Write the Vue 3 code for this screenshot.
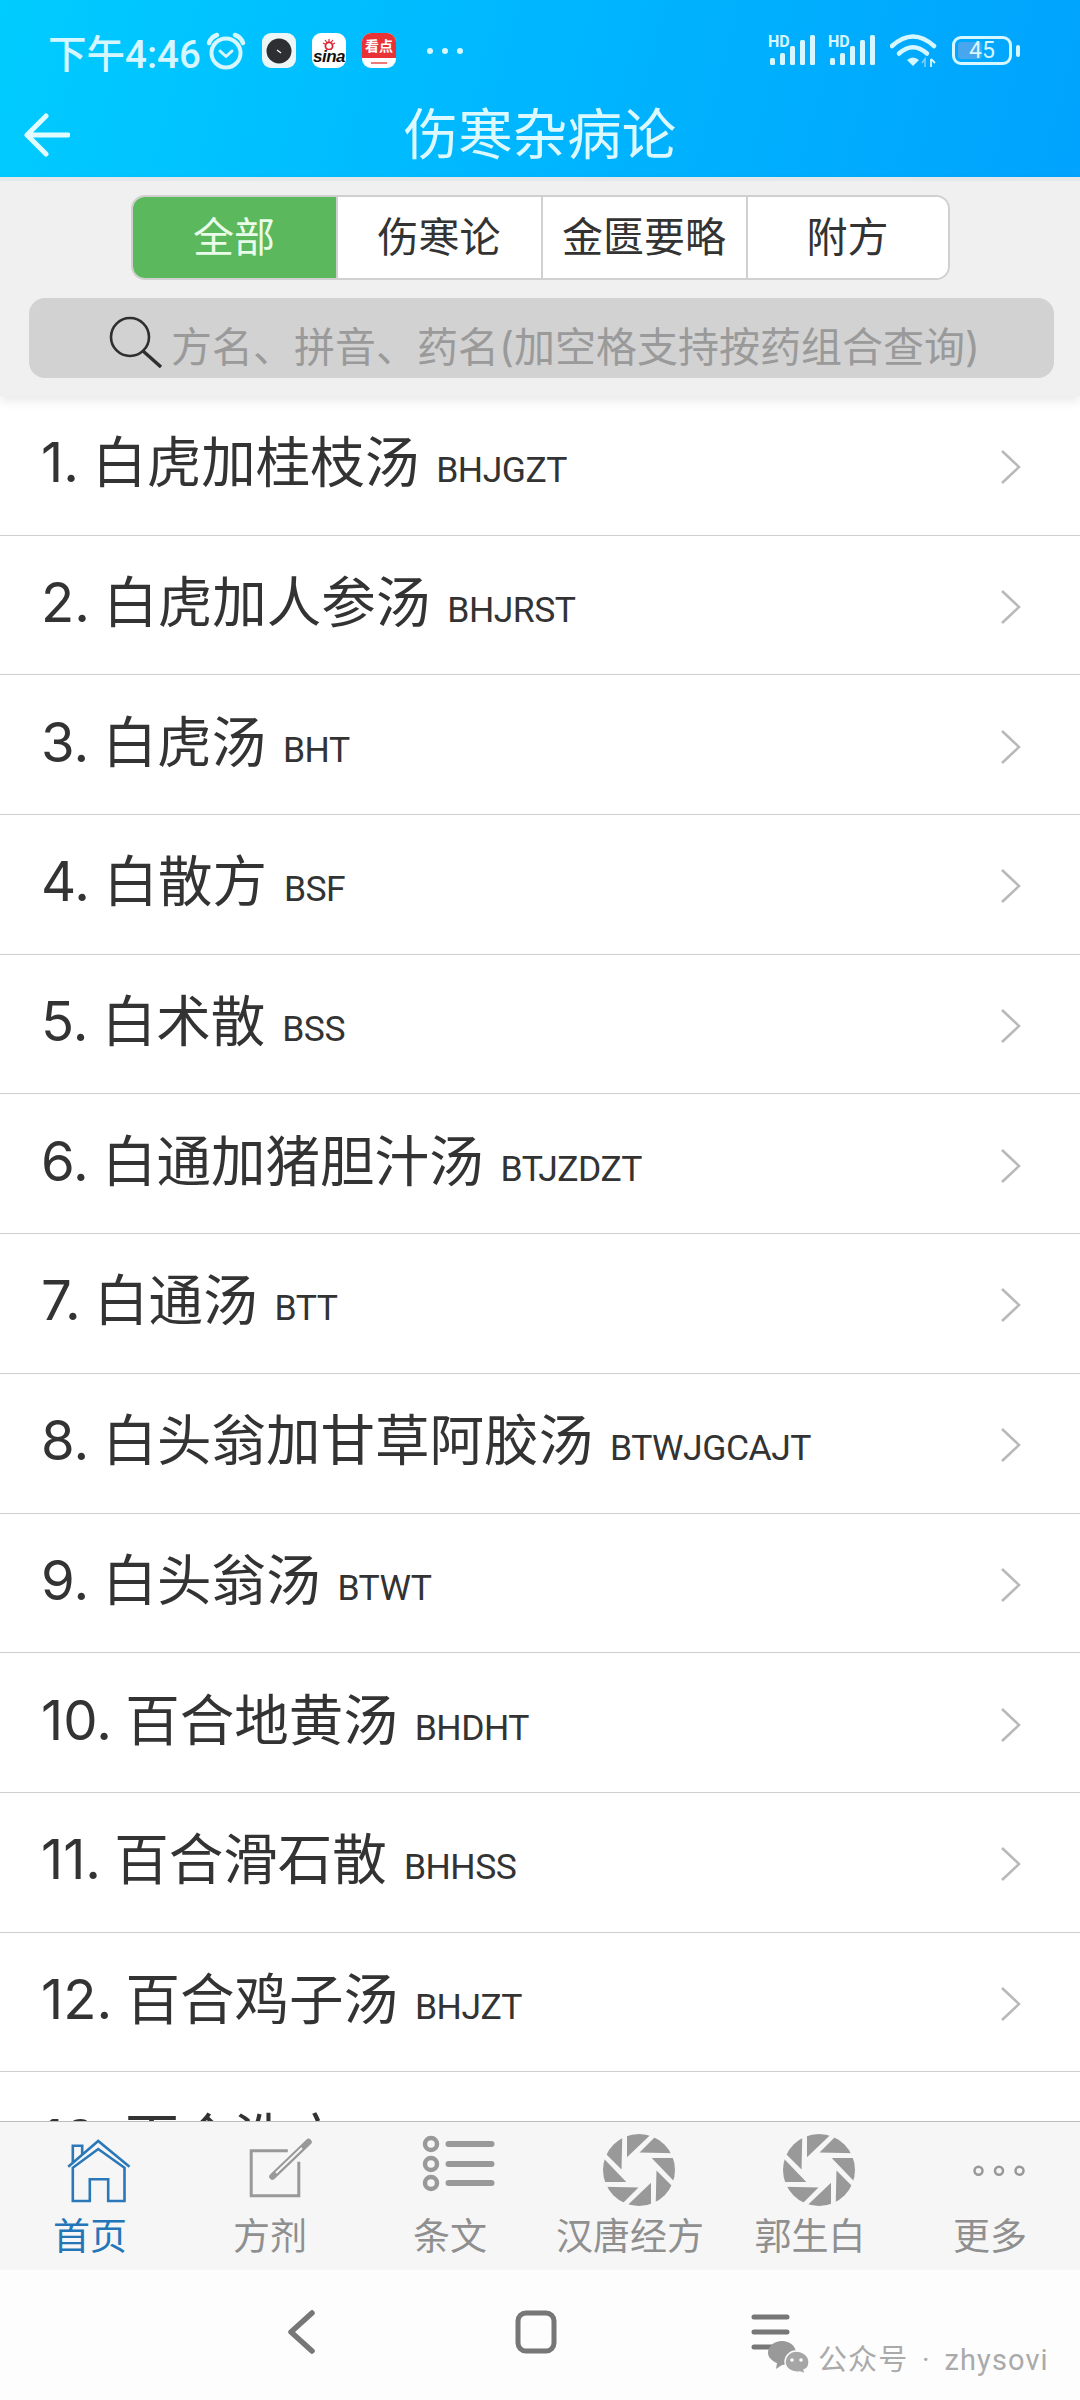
<script setup>
const rows = [
  ['白虎加桂枝汤', 'BHJGZT'],
  ['白虎加人参汤', 'BHJRST'],
  ['白虎汤', 'BHT'],
  ['白散方', 'BSF'],
  ['白术散', 'BSS'],
  ['白通加猪胆汁汤', 'BTJZDZT'],
  ['白通汤', 'BTT'],
  ['白头翁加甘草阿胶汤', 'BTWJGCAJT'],
  ['白头翁汤', 'BTWT'],
  ['百合地黄汤', 'BHDHT'],
  ['百合滑石散', 'BHHSS'],
  ['百合鸡子汤', 'BHJZT'],
  ['百合洗方', 'BHXF'],
]
const segments = ['全部', '伤寒论', '金匮要略', '附方']
const tabs = [
  { label: '首页', icon: 'home', active: true },
  { label: '方剂', icon: 'edit' },
  { label: '条文', icon: 'list' },
  { label: '汉唐经方', icon: 'aperture' },
  { label: '郭生白', icon: 'aperture' },
  { label: '更多', icon: 'more' },
]
const blades = [0, 45, 90, 135, 180, 225, 270, 315]
const signalBars = [
  { x: 2, y: 23, h: 7 },
  { x: 12, y: 18, h: 12 },
  { x: 22, y: 11, h: 19 },
  { x: 32, y: 5, h: 25 },
  { x: 42, y: 0, h: 30 },
]
</script>

<template>
  <div class="screen">
    <header class="appbar">
      <div class="status">
        <span class="time">下午4:46</span>
        <svg class="alarm" width="40" height="38" viewBox="0 0 40 38" fill="none" stroke="#d6f7ff">
          <circle cx="20" cy="21" r="14.5" stroke-width="4" />
          <path d="M3 11 Q5 5 11 3 M37 11 Q35 5 29 3" stroke-width="4.5" stroke-linecap="round" />
          <path d="M14 19 L20 24.5 L26 19" stroke-width="3" stroke-linecap="round" stroke-linejoin="round" />
        </svg>
        <span class="app app-clock">
          <svg width="26" height="26" viewBox="0 0 26 26">
            <circle cx="13" cy="13" r="12.5" fill="#2e2f33" />
            <path d="M11 12 L15 15" stroke="#fff" stroke-width="1.2" />
          </svg>
        </span>
        <span class="app app-sina">
          <svg width="16" height="11" viewBox="0 0 16 11" fill="none" stroke="#d9232e">
            <circle cx="8" cy="7" r="3.6" stroke-width="1.8" />
            <path d="M2 4 L4 5 M4 1 L6 3.5 M8 0 V3 M12 1 L10 3.5 M14 4 L12 5" stroke-width="1.2" />
          </svg>
          <span class="sina-text">sina</span>
        </span>
        <span class="app app-kd">
          <span class="kd-top">看点</span>
          <span class="kd-bottom"><i></i></span>
        </span>
        <span class="status-dots"><i></i><i></i><i></i></span>

        <span class="status-right">
          <svg v-for="n in 2" :key="n" class="signal" width="50" height="32" viewBox="0 0 50 32">
            <text x="0" y="12" class="hd">HD</text>
            <rect v-for="b in signalBars" :key="b.x" :x="b.x" :y="b.y" width="5" :height="b.h" rx="1.5" fill="#d6f7ff" />
          </svg>
          <svg class="wifi" width="47" height="34" viewBox="0 0 47 34" fill="none" stroke="#d6f7ff">
            <path d="M2 12 Q23 -7 44 12" stroke-width="4.5" stroke-linecap="round" />
            <path d="M9 19.5 Q23 7 37 19.5" stroke-width="4.5" stroke-linecap="round" />
            <path d="M17 26 L23 32 L29 26 Q23 21 17 26 Z" fill="#d6f7ff" stroke="none" />
            <path d="M35 33 V25 L32 29" stroke="#7fcdf3" stroke-width="1.6" />
            <path d="M41 25 V33 M41 25 L45 29" stroke-width="1.8" />
          </svg>
          <span class="battery">
            <span class="battery-box">
              <span class="battery-fill"></span>
              <span class="battery-num">45</span>
            </span>
            <span class="battery-nub"></span>
          </span>
        </span>
      </div>

      <div class="toolbar">
        <svg class="back" width="46" height="44" viewBox="0 0 46 44" fill="none" stroke="#e2fbff" stroke-width="5" stroke-linecap="round" stroke-linejoin="round">
          <path d="M22 3 L3 22 L22 41 M3 22 H44" />
        </svg>
        <h1 class="title">伤寒杂病论</h1>
      </div>
    </header>

    <section class="filter">
      <div class="segmented">
        <button v-for="(s, i) in segments" :key="s" class="seg" :class="{ 'seg-on': i === 0 }">{{ s }}</button>
      </div>
      <div class="search">
        <svg class="lens" width="54" height="52" viewBox="0 0 54 52" fill="none" stroke="#2f2f2f" stroke-width="2.6">
          <circle cx="21" cy="21" r="19" />
          <path d="M34 35 L52 51" stroke-width="3.4" />
        </svg>
        <span class="placeholder">方名、拼音、药名(加空格支持按药组合查询)</span>
      </div>
    </section>

    <main class="list">
      <div v-for="(r, i) in rows" :key="r[1]" class="row">
        <span class="row-name">{{ i + 1 }}. {{ r[0] }}</span>
        <span class="row-code">{{ r[1] }}</span>
        <svg class="chev" width="22" height="36" viewBox="0 0 22 36" fill="none" stroke="#b9b9b9" stroke-width="2.6">
          <path d="M2 2 L19 18 L2 34" />
        </svg>
      </div>
    </main>

    <nav class="tabbar">
      <div v-for="t in tabs" :key="t.label" class="tab" :class="{ 'tab-on': t.active }">
        <svg class="tab-icon" width="90" height="80" viewBox="0 0 90 80" fill="none">
          <g v-if="t.icon === 'home'" stroke="#2a78b8" stroke-width="2.6">
            <path d="M14.2 37.7 L44.2 12 L75.5 37.7" />
            <path d="M18.8 38.7 L44.2 20 L70.5 38.7" />
            <path d="M18.8 38 V72 H35.8 V50.3 H54.2 V72 H70.5 V38" />
            <path d="M18.8 33 V16.7 H28.2 V25.6" />
          </g>
          <g v-else-if="t.icon === 'edit'">
            <path d="M53.8 21.7 H17.2 V66.7 H64.8 V32.7" stroke="#999" stroke-width="3" />
            <path d="M38.5 47.5 L74.5 13" stroke="#999" stroke-width="6.5" stroke-linecap="round" />
            <path d="M42 44 L68 19" stroke="#f6f6f6" stroke-width="2" />
          </g>
          <g v-else-if="t.icon === 'list'">
            <circle cx="17" cy="15" r="6" stroke="#999" stroke-width="4.5" />
            <circle cx="17" cy="35" r="6" stroke="#999" stroke-width="4.5" />
            <circle cx="17" cy="54" r="6" stroke="#999" stroke-width="4.5" />
            <path d="M34.5 15 H77.5 M34.5 35 H77.5 M34.5 54 H77.5" stroke="#999" stroke-width="6" stroke-linecap="round" />
          </g>
          <g v-else-if="t.icon === 'aperture'">
            <clipPath id="aperture-clip"><circle cx="45" cy="41" r="36" /></clipPath>
            <g clip-path="url(#aperture-clip)">
              <polygon
                v-for="a in blades"
                :key="a"
                points="33,28.3 33,1 61,1.5"
                fill="#999"
                :transform="`rotate(${a} 45 41)`"
              />
            </g>
          </g>
          <g v-else stroke="#999" stroke-width="2.5">
            <circle cx="24.5" cy="41.7" r="4" />
            <circle cx="45" cy="41.7" r="4" />
            <circle cx="65.5" cy="41.7" r="4" />
          </g>
        </svg>
        <span class="tab-label">{{ t.label }}</span>
      </div>
    </nav>

    <footer class="sysnav">
      <span class="sys-slot">
        <svg width="28" height="44" viewBox="0 0 28 44" fill="none" stroke="#777" stroke-width="5.5" stroke-linecap="round" stroke-linejoin="round">
          <path d="M25 3 L4 22 L25 41" />
        </svg>
      </span>
      <span class="sys-slot">
        <svg width="42" height="44" viewBox="0 0 42 44" fill="none" stroke="#777" stroke-width="5">
          <rect x="3" y="3" width="36" height="38" rx="8" />
        </svg>
      </span>
      <span class="sys-slot">
        <svg width="40" height="40" viewBox="0 0 40 40" fill="none" stroke="#777" stroke-width="5" stroke-linecap="round">
          <path d="M3 5 H36 M3 20 H36 M3 35 H36" />
        </svg>
      </span>
      <div class="watermark">
        <svg width="42" height="34" viewBox="0 0 42 34">
          <path d="M14 1 C22 1 28 6 28 13 C28 20 22 25 14 25 L8 29 L9 23 C4 21 0 17 0 13 C0 6 6 1 14 1 Z" fill="#999" />
          <path d="M28 11 C35 11 41 16 41 22 C41 26 39 29 36 30 L37 34 L32 32 C25 33 17 29 17 22 C17 16 22 11 28 11 Z" fill="#a6a6a6" stroke="#fdfdfd" stroke-width="1.4" />
          <circle cx="24" cy="20" r="1.8" fill="#fdfdfd" />
          <circle cx="33" cy="20" r="1.8" fill="#fdfdfd" />
        </svg>
        <span class="wm-text">公众号 · zhysovi</span>
      </div>
    </footer>
  </div>
</template>

<style scoped>
.screen {
  position: relative;
  width: 1080px;
  height: 2400px;
  overflow: hidden;
  display: flex;
  flex-direction: column;
  background: #fff;
  font-family: "Inter", "Noto Sans CJK SC", sans-serif;
  color: #333;
}

/* header */
.appbar {
  flex: none;
  height: 177px;
  background: linear-gradient(105deg, #00ccff 0%, #00baff 40%, #00a3fd 100%);
  color: #d6f7ff;
}
.status {
  height: 86px;
  padding: 15px 0 0 48px;
  box-sizing: border-box;
  display: flex;
  align-items: center;
}
.time {
  font-family: "Roboto", "Noto Sans CJK SC", sans-serif;
  font-size: 38.5px;
  font-weight: 500;
  white-space: nowrap;
  width: 158px;
}
.alarm {
  margin-right: 16px;
}
.app {
  flex: none;
  width: 34px;
  height: 35px;
  border-radius: 9px;
  margin-right: 16px;
  overflow: hidden;
  display: flex;
  flex-direction: column;
  align-items: center;
  justify-content: center;
  background: #fff;
}
.app-clock { background: #edf6f6; }
.sina-text {
  font-family: "Liberation Sans", sans-serif;
  font-size: 17px;
  line-height: 13px;
  font-weight: 700;
  font-style: italic;
  color: #111;
  letter-spacing: -0.5px;
}
.app-kd { justify-content: flex-start; }
.kd-top {
  width: 100%;
  height: 25px;
  background: #e93235;
  color: #fff;
  font-size: 14px;
  font-weight: 700;
  line-height: 25px;
  text-align: center;
  white-space: nowrap;
}
.kd-bottom {
  flex: 1;
  display: flex;
  align-items: center;
}
.kd-bottom i {
  display: block;
  width: 16px;
  height: 2px;
  background: #e77;
}
.status-dots {
  display: flex;
  gap: 9px;
  margin-left: 15px;
}
.status-dots i {
  width: 6px;
  height: 6px;
  border-radius: 50%;
  background: #d6f7ff;
}
.status-right {
  margin-left: auto;
  padding-right: 60px;
  display: flex;
  align-items: center;
}
.signal {
  margin-right: 10px;
  overflow: visible;
}
.hd {
  font-family: "Roboto", sans-serif;
  font-size: 16px;
  font-weight: 700;
  fill: #d6f7ff;
}
.wifi {
  margin: 0 15px 0 2px;
}
.battery {
  display: flex;
  align-items: center;
  gap: 4px;
}
.battery-box {
  position: relative;
  width: 60px;
  height: 29px;
  box-sizing: border-box;
  border: 3px solid #d6f7ff;
  border-radius: 9px;
  display: flex;
  align-items: center;
  justify-content: center;
}
.battery-fill {
  position: absolute;
  left: 3px;
  top: 3px;
  bottom: 3px;
  width: 24px;
  border-radius: 3px;
  background: #48a6ee;
}
.battery-num {
  position: relative;
  font-family: "Roboto", sans-serif;
  font-size: 23px;
  line-height: 23px;
  color: #d6f7ff;
}
.battery-nub {
  width: 4px;
  height: 12px;
  border-radius: 2px;
  background: #d6f7ff;
}
.toolbar {
  height: 91px;
  box-sizing: border-box;
  display: grid;
  grid-template-columns: 1fr auto 1fr;
  align-items: center;
  padding: 6px 24px 0;
}
.title {
  margin: 0;
  font-size: 54.5px;
  font-weight: 400;
  line-height: 85px;
  color: #dcf9ff;
  white-space: nowrap;
}

/* filter */
.filter {
  position: relative;
  z-index: 1;
  flex: none;
  height: 219px;
  box-sizing: border-box;
  padding-top: 14px;
  display: flex;
  flex-direction: column;
  align-items: center;
  background: #f0f0f0;
  border-top: 4px solid #e4e8ea;
  box-shadow: 0 5px 10px rgba(0, 0, 0, 0.09);
}
.segmented {
  width: 819px;
  height: 85px;
  box-sizing: border-box;
  display: grid;
  grid-template-columns: 203px 205px 205px 1fr;
  border: 2px solid #d0d0d0;
  border-radius: 14px;
  overflow: hidden;
  background: #fff;
}
.seg {
  border: 0;
  border-left: 2px solid #d0d0d0;
  padding: 0;
  background: #fff;
  color: #333;
  font: inherit;
  font-size: 41px;
  line-height: 1;
  white-space: nowrap;
}
.seg-on {
  border-left: 0;
  background: #5cb85c;
  color: #e9fbe9;
}
.search {
  width: 1025px;
  height: 80px;
  margin: 18px 0 0 3px;
  box-sizing: border-box;
  padding-left: 80px;
  display: flex;
  align-items: center;
  gap: 8px;
  border-radius: 16px;
  background: #d2d2d2;
}
.lens {
  flex: none;
  margin-top: 8px;
}
.placeholder {
  margin-top: 18px;
  font-size: 41px;
  line-height: 1;
  color: #9a9a9a;
  white-space: nowrap;
}

/* list */
.list {
  flex: 1;
  min-height: 0;
  overflow: hidden;
}
.row {
  height: 139.7px;
  box-sizing: border-box;
  padding: 0 59px 6px 41px;
  display: flex;
  align-items: baseline;
  align-content: center;
  flex-wrap: wrap;
  border-bottom: 1.5px solid #cfcfcf;
  position: relative;
}
.row-name {
  font-size: 54.5px;
  line-height: 70px;
  color: #333;
  white-space: nowrap;
  word-spacing: -2px;
}
.row-code {
  margin-left: 17px;
  font-family: "Roboto", sans-serif;
  font-size: 35.5px;
  letter-spacing: -0.5px;
  color: #333;
}
.chev {
  position: absolute;
  right: 58px;
  top: 50%;
  margin-top: -16px;
}

/* tabs */
.tabbar {
  flex: none;
  height: 149px;
  box-sizing: border-box;
  display: grid;
  grid-template-columns: repeat(6, 1fr);
  padding-top: 7px;
  border-top: 1.5px solid #bdbdbd;
  background: #f6f6f6;
}
.tab {
  display: flex;
  flex-direction: column;
  align-items: center;
  color: #8f8f8f;
}
.tab-on {
  color: #2377b9;
}
.tab-icon {
  margin-left: 17px;
  flex: none;
}
.tab-label {
  margin-top: 6px;
  font-size: 37px;
  line-height: 44px;
  white-space: nowrap;
}

/* system nav */
.sysnav {
  position: relative;
  flex: none;
  height: 130px;
  box-sizing: border-box;
  padding: 0 8px 6px 0;
  display: flex;
  align-items: center;
  justify-content: center;
  background: #fdfdfd;
}
.sys-slot {
  width: 235px;
  display: flex;
  justify-content: center;
}
.watermark {
  position: absolute;
  left: 768px;
  top: 66px;
  display: flex;
  align-items: center;
  gap: 8px;
}
.wm-text {
  font-family: "Roboto", "Noto Sans CJK SC", sans-serif;
  font-size: 29px;
  letter-spacing: 1.1px;
  word-spacing: 5.5px;
  color: #aaa;
  white-space: nowrap;
}
</style>
